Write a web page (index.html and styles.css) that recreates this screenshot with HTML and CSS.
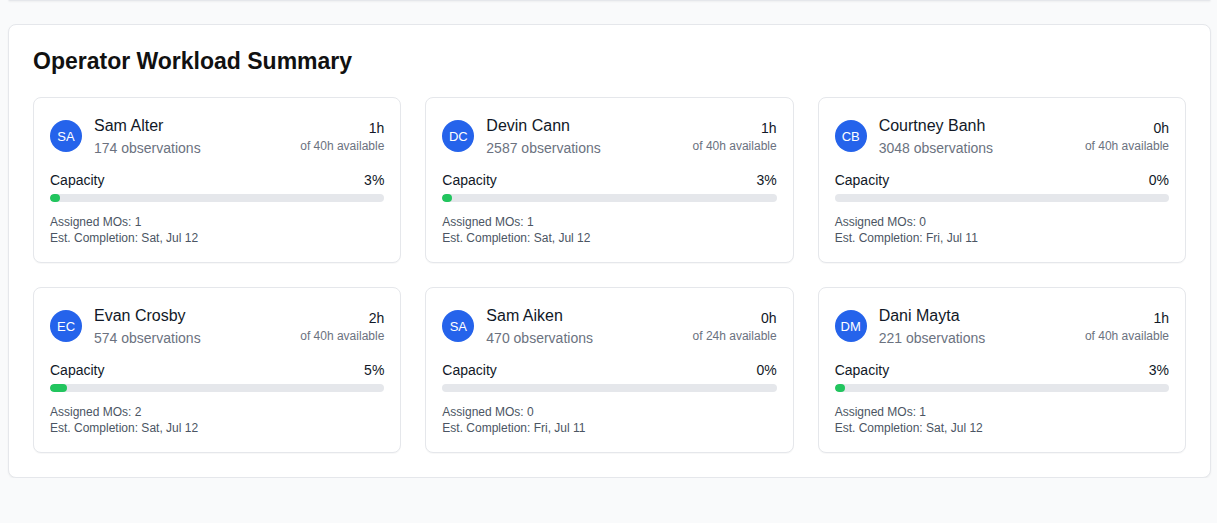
FILE: index.html
```html
<!DOCTYPE html>
<html>
<head>
<meta charset="utf-8">
<link rel="stylesheet" href="styles.css">
</head>
<body>
<div class="prev-card"></div>
<section class="panel">
  <h2 class="panel-title">Operator Workload Summary</h2>
  <div class="grid">
    <div class="op-card">
      <div class="op-head">
        <div class="who">
          <div class="avatar">SA</div>
          <div>
            <div class="name">Sam Alter</div>
            <div class="obs">174 observations</div>
          </div>
        </div>
        <div class="hours">
          <div class="h-val">1h</div>
          <div class="h-sub">of 40h available</div>
        </div>
      </div>
      <div class="cap-row"><span>Capacity</span><span>3%</span></div>
      <div class="bar"><div class="fill" style="width:3%"></div></div>
      <div class="meta">
        <div>Assigned MOs: 1</div>
        <div>Est. Completion: Sat, Jul 12</div>
      </div>
    </div>
    <div class="op-card">
      <div class="op-head">
        <div class="who">
          <div class="avatar">DC</div>
          <div>
            <div class="name">Devin Cann</div>
            <div class="obs">2587 observations</div>
          </div>
        </div>
        <div class="hours">
          <div class="h-val">1h</div>
          <div class="h-sub">of 40h available</div>
        </div>
      </div>
      <div class="cap-row"><span>Capacity</span><span>3%</span></div>
      <div class="bar"><div class="fill" style="width:3%"></div></div>
      <div class="meta">
        <div>Assigned MOs: 1</div>
        <div>Est. Completion: Sat, Jul 12</div>
      </div>
    </div>
    <div class="op-card">
      <div class="op-head">
        <div class="who">
          <div class="avatar">CB</div>
          <div>
            <div class="name">Courtney Banh</div>
            <div class="obs">3048 observations</div>
          </div>
        </div>
        <div class="hours">
          <div class="h-val">0h</div>
          <div class="h-sub">of 40h available</div>
        </div>
      </div>
      <div class="cap-row"><span>Capacity</span><span>0%</span></div>
      <div class="bar"><div class="fill" style="width:0%"></div></div>
      <div class="meta">
        <div>Assigned MOs: 0</div>
        <div>Est. Completion: Fri, Jul 11</div>
      </div>
    </div>
    <div class="op-card">
      <div class="op-head">
        <div class="who">
          <div class="avatar">EC</div>
          <div>
            <div class="name">Evan Crosby</div>
            <div class="obs">574 observations</div>
          </div>
        </div>
        <div class="hours">
          <div class="h-val">2h</div>
          <div class="h-sub">of 40h available</div>
        </div>
      </div>
      <div class="cap-row"><span>Capacity</span><span>5%</span></div>
      <div class="bar"><div class="fill" style="width:5%"></div></div>
      <div class="meta">
        <div>Assigned MOs: 2</div>
        <div>Est. Completion: Sat, Jul 12</div>
      </div>
    </div>
    <div class="op-card">
      <div class="op-head">
        <div class="who">
          <div class="avatar">SA</div>
          <div>
            <div class="name">Sam Aiken</div>
            <div class="obs">470 observations</div>
          </div>
        </div>
        <div class="hours">
          <div class="h-val">0h</div>
          <div class="h-sub">of 24h available</div>
        </div>
      </div>
      <div class="cap-row"><span>Capacity</span><span>0%</span></div>
      <div class="bar"><div class="fill" style="width:0%"></div></div>
      <div class="meta">
        <div>Assigned MOs: 0</div>
        <div>Est. Completion: Fri, Jul 11</div>
      </div>
    </div>
    <div class="op-card">
      <div class="op-head">
        <div class="who">
          <div class="avatar">DM</div>
          <div>
            <div class="name">Dani Mayta</div>
            <div class="obs">221 observations</div>
          </div>
        </div>
        <div class="hours">
          <div class="h-val">1h</div>
          <div class="h-sub">of 40h available</div>
        </div>
      </div>
      <div class="cap-row"><span>Capacity</span><span>3%</span></div>
      <div class="bar"><div class="fill" style="width:3%"></div></div>
      <div class="meta">
        <div>Assigned MOs: 1</div>
        <div>Est. Completion: Sat, Jul 12</div>
      </div>
    </div>
  </div>
</section>
</body>
</html>
```
FILE: styles.css
```css
* { box-sizing: border-box; }
html, body { margin: 0; }
body {
  background: #f9fafb;
  padding: 0 6px 0 8px;
  font-family: "Liberation Sans", Arial, sans-serif;
  color: #111827;
}
.prev-card {
  height: 2px;
  margin-top: -1px;
  background: #fff;
  border-bottom: 1px solid #e5e7eb;
  border-radius: 0 0 8px 8px;
  box-shadow: 0 1px 2px rgba(0,0,0,0.05);
  margin-bottom: 23px;
}
.panel {
  background: #fff;
  border: 1px solid #e5e7eb;
  border-radius: 8px;
  box-shadow: 0 1px 2px rgba(0,0,0,0.05);
  padding: 20px 24px 24px;
}
.panel-title {
  margin: 0 0 20px;
  font-size: 23px;
  line-height: 32px;
  font-weight: 700;
  color: #111;
}
.grid {
  display: grid;
  grid-template-columns: repeat(3, 1fr);
  gap: 24px;
}
.op-card {
  border: 1px solid #e5e7eb;
  border-radius: 8px;
  padding: 16px;
  background: #fff;
  box-shadow: 0 1px 1px rgba(0,0,0,0.03);
}
.op-head {
  display: flex;
  justify-content: space-between;
  align-items: center;
  margin-bottom: 12px;
}
.who {
  display: flex;
  align-items: center;
  gap: 12px;
}
.avatar {
  width: 32px;
  height: 32px;
  border-radius: 50%;
  background: #2563eb;
  color: #fff;
  display: flex;
  align-items: center;
  justify-content: center;
  font-size: 13px;
  line-height: 1;
}
.name {
  font-size: 16px;
  line-height: 24px;
  color: #111827;
}
.obs {
  font-size: 14px;
  line-height: 20px;
  color: #6b7280;
}
.hours { text-align: right; }
.h-val {
  font-size: 14px;
  line-height: 20px;
  font-weight: 500;
  color: #111827;
}
.h-sub {
  font-size: 12px;
  line-height: 16px;
  color: #6b7280;
}
.cap-row {
  display: flex;
  justify-content: space-between;
  font-size: 14px;
  line-height: 20px;
  color: #111827;
  margin-bottom: 4px;
}
.bar {
  height: 8px;
  background: #e5e7eb;
  border-radius: 9999px;
  overflow: hidden;
}
.fill {
  height: 100%;
  background: #22c55e;
  border-radius: 9999px;
}
.meta {
  margin-top: 12px;
  font-size: 12px;
  line-height: 16px;
  color: #4b5563;
}
```
